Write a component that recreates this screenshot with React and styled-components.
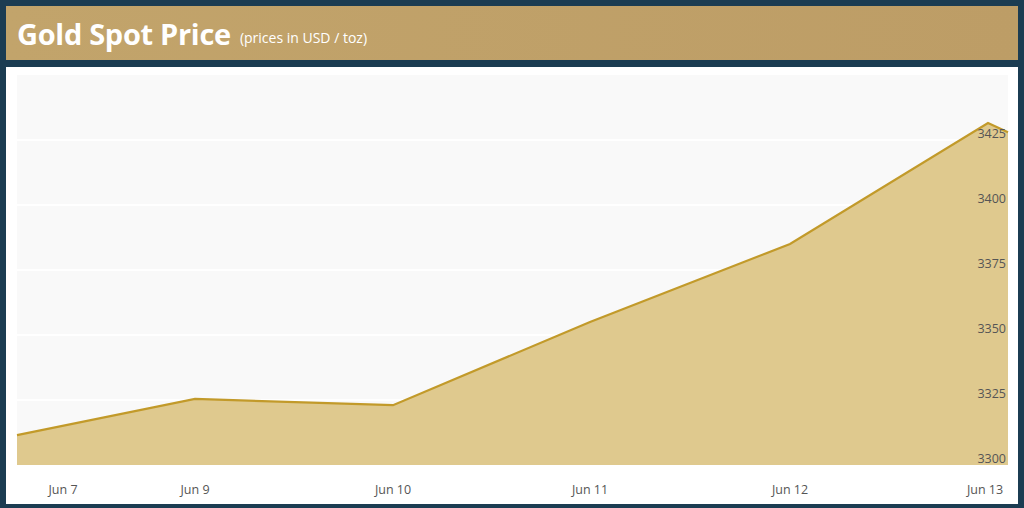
import styled, { createGlobalStyle } from 'styled-components'

const Global = createGlobalStyle`
  body { margin: 0; background: #1b3c52; font-family: "Open Sans", "Liberation Sans", sans-serif; }
`
const Frame = styled.div`
  width: 1024px;
  height: 508px;
  box-sizing: border-box;
  padding: 6px 6px 4px;
  display: flex;
  flex-direction: column;
  gap: 7px;
`
const Header = styled.div`
  height: 54px;
  background: linear-gradient(90deg, #c2a46b, #bd9d66);
  display: flex;
  align-items: center;
  padding: 0 11px;
  gap: 9px;
`
const Title = styled.h1`
  margin: 0;
  color: #fff;
  font-size: 29px;
  font-weight: 700;
  letter-spacing: -0.3px;
`
const Sub = styled.span`
  color: #fff;
  font-size: 14px;
  margin-top: 8px;
`
const Panel = styled.div`
  flex: 1;
  background: #fff;
`

const w = 1012
const px = (x) => x - 6
const py = (v) => 465 - 67 - (v - 3300) * 2.6
const pts = [[17, 3311.5], [195, 3325.4], [393, 3323], [590, 3355], [790, 3385], [988, 3431.5], [1008, 3428]]
const line = pts.map(([x, v]) => `${px(x)},${py(v)}`).join(' ')
const area = `${px(17)},${py(3300)} ${line} ${px(1008)},${py(3300)}`
const ticks = [3300, 3325, 3350, 3375, 3400, 3425]
const dates = [['Jun 7', 63], ['Jun 9', 195], ['Jun 10', 393], ['Jun 11', 590], ['Jun 12', 790], ['Jun 13', 985]]

export default function App() {
  return (
    <>
      <Global />
      <Frame>
        <Header>
          <Title>Gold Spot Price</Title>
          <Sub>(prices in USD / toz)</Sub>
        </Header>
        <Panel>
          <svg width={w} height="435" style={{ display: 'block' }} fontFamily="Open Sans, sans-serif">
            <rect x={px(17)} y="8" width={991} height={py(3300) - 8} fill="#f9f9f9" />
            {ticks.map((t) => (
              <line key={t} x1={px(17)} x2={px(1008)} y1={py(t)} y2={py(t)} stroke="#fff" strokeWidth="2" />
            ))}
            <polygon points={area} fill="#dfc98e" />
            <polyline points={line} fill="none" stroke="#c29a2a" strokeWidth="2.2" />
            {ticks.map((t) => (
              <text key={t} x={px(1006)} y={py(t) - 2} textAnchor="end" fontSize="12.5" fill="#555">{t}</text>
            ))}
            {dates.map(([d, x]) => (
              <text key={d} x={px(x)} y={427} textAnchor="middle" fontSize="12.5" fill="#555">{d}</text>
            ))}
          </svg>
        </Panel>
      </Frame>
    </>
  )
}
